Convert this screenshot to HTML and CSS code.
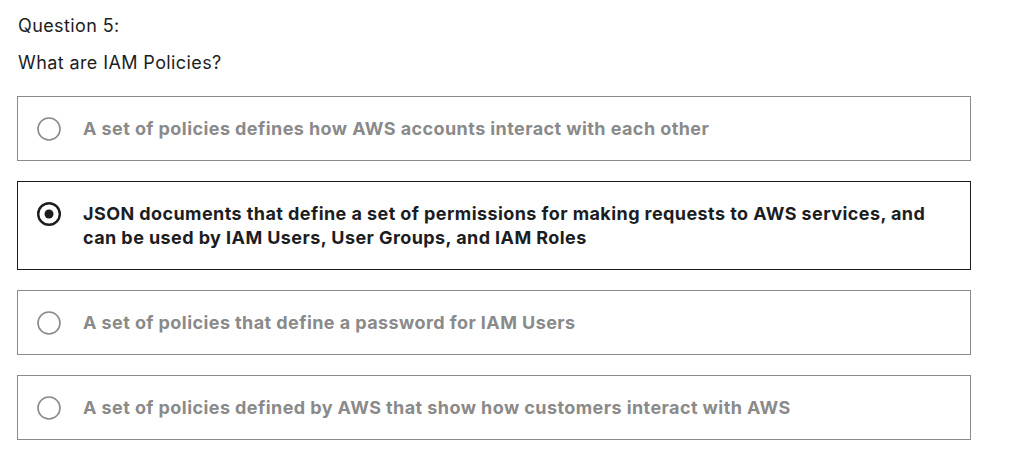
FILE: index.html
```html
<!DOCTYPE html>
<html>
<head>
<meta charset="utf-8">
<link rel="stylesheet" href="styles.css">
</head>
<body>
<div class="quiz">
  <div class="q-num">Question 5:</div>
  <div class="q-text">What are IAM Policies?</div>
  <div class="options">
    <label class="option">
      <svg class="radio" width="24" height="24" viewBox="0 0 24 24"><circle cx="12" cy="12" r="11" fill="none" stroke="#8a8a8a" stroke-width="1.6"/></svg>
      <span class="opt-text">A set of policies defines how AWS accounts interact with each other</span>
    </label>
    <label class="option selected">
      <svg class="radio" width="24" height="24" viewBox="0 0 24 24"><circle cx="12" cy="12" r="10.8" fill="none" stroke="#1c1d1f" stroke-width="2.4"/><circle cx="12" cy="12" r="4.5" fill="#1c1d1f"/></svg>
      <span class="opt-text">JSON documents that define a set of permissions for making requests to AWS services, and can be used by IAM Users, User Groups, and IAM Roles</span>
    </label>
    <label class="option">
      <svg class="radio" width="24" height="24" viewBox="0 0 24 24"><circle cx="12" cy="12" r="11" fill="none" stroke="#8a8a8a" stroke-width="1.6"/></svg>
      <span class="opt-text">A set of policies that define a password for IAM Users</span>
    </label>
    <label class="option">
      <svg class="radio" width="24" height="24" viewBox="0 0 24 24"><circle cx="12" cy="12" r="11" fill="none" stroke="#8a8a8a" stroke-width="1.6"/></svg>
      <span class="opt-text">A set of policies defined by AWS that show how customers interact with AWS</span>
    </label>
  </div>
</div>
</body>
</html>
```
FILE: styles.css
```css
* { box-sizing: border-box; }
body {
  margin: 0;
  background: #fff;
  font-family: Inter, "Liberation Sans", sans-serif;
  color: #1c1d1f;
}
.quiz {
  padding: 14px 41px 0 17px;
}
.q-num {
  font-size: 18px;
  line-height: 24px;
  letter-spacing: 0.4px;
  padding-left: 1px;
}
.q-text {
  font-size: 18px;
  line-height: 24px;
  letter-spacing: 0.4px;
  margin-top: 13px;
  padding-left: 1px;
}
.options {
  margin-top: 21px;
  display: flex;
  flex-direction: column;
  gap: 20px;
}
.option {
  display: flex;
  align-items: flex-start;
  gap: 22px;
  border: 1px solid #8a8a8a;
  padding: 20px 40px 19px 19px;
  color: #8a8a8a;
}
.option.selected {
  border-color: #1c1d1f;
  color: #1c1d1f;
}
.radio {
  flex: none;
  display: block;
}
.opt-text {
  font-size: 18px;
  font-weight: 700;
  line-height: 24px;
  letter-spacing: 0.42px;
}
```
